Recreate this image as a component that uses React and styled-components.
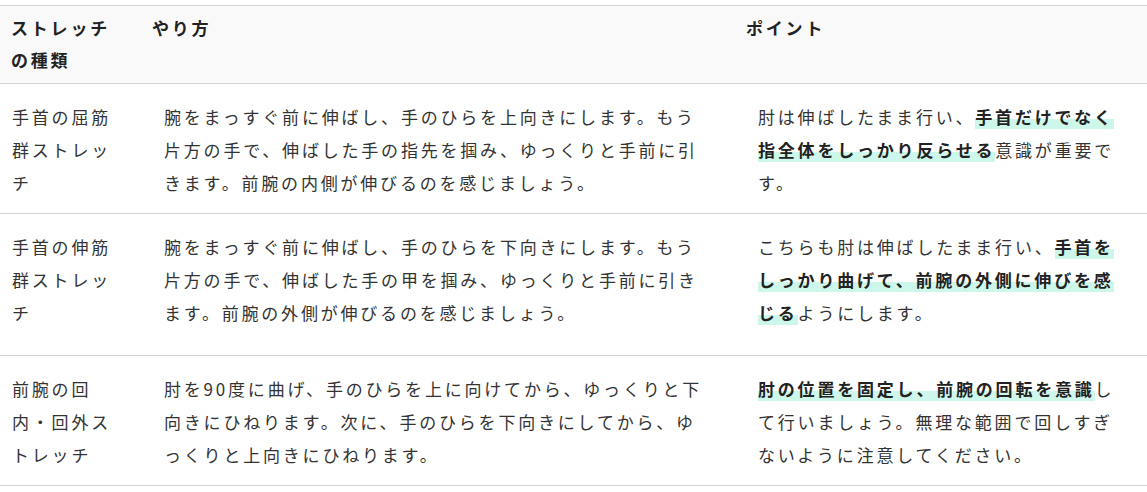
import React from "react";
import styled, { createGlobalStyle } from "styled-components";

const GlobalStyle = createGlobalStyle`
  body {
    margin: 0;
    padding-top: 5px;
    background: #fff;
    font-family: "Noto Sans CJK JP", "Noto Sans", sans-serif;
    color: #333;
  }
`;

const Table = styled.table`
  width: 1147px;
  border-collapse: collapse;
  table-layout: fixed;
  font-size: 17px;
  letter-spacing: 2.8px;
`;

const Col = styled.col`
  width: ${(p) => p.$w}px;
`;

const HeadRow = styled.tr`
  background-color: #f9f9f9;
  border-top: 1px solid #d3d3d3;
  border-bottom: 1px solid #d3d3d3;
`;

const HeadCell = styled.th`
  text-align: left;
  vertical-align: top;
  font-weight: 700;
  color: #222;
  line-height: 32px;
  padding: 6px 12px 7px ${(p) => p.$left}px;
`;

const Row = styled.tr`
  border-bottom: 1px solid #d3d3d3;
`;

const Cell = styled.td`
  vertical-align: top;
  line-height: 33px;
  padding: 16px 24px ${(p) => 14 + (p.$extra || 0)}px ${(p) => p.$left}px;
`;

const Mark = styled.strong`
  font-weight: 700;
  color: #222;
  background: linear-gradient(transparent 60%, #cdf7ea 60%);
`;

const rows = [
  {
    kind: "手首の屈筋群ストレッチ",
    how: "腕をまっすぐ前に伸ばし、手のひらを上向きにします。もう片方の手で、伸ばした手の指先を掴み、ゆっくりと手前に引きます。前腕の内側が伸びるのを感じましょう。",
    point: (
      <>
        肘は伸ばしたまま行い、<Mark>手首だけでなく指全体をしっかり反らせる</Mark>
        意識が重要です。
      </>
    ),
  },
  {
    kind: "手首の伸筋群ストレッチ",
    extra: 12,
    how: "腕をまっすぐ前に伸ばし、手のひらを下向きにします。もう片方の手で、伸ばした手の甲を掴み、ゆっくりと手前に引きます。前腕の外側が伸びるのを感じましょう。",
    point: (
      <>
        こちらも肘は伸ばしたまま行い、
        <Mark>手首をしっかり曲げて、前腕の外側に伸びを感じる</Mark>
        ようにします。
      </>
    ),
  },
  {
    kind: "前腕の回内・回外ストレッチ",
    how: "肘を90度に曲げ、手のひらを上に向けてから、ゆっくりと下向きにひねります。次に、手のひらを下向きにしてから、ゆっくりと上向きにひねります。",
    point: (
      <>
        <Mark>肘の位置を固定し、前腕の回転を意識</Mark>
        して行いましょう。無理な範囲で回しすぎないように注意してください。
      </>
    ),
  },
];

const App = () => {
  return (
    <>
      <GlobalStyle />
      <Table>
        <colgroup>
          <Col $w={140} />
          <Col $w={594} />
          <Col $w={413} />
        </colgroup>
        <thead>
          <HeadRow>
            <HeadCell $left={11}>ストレッチの種類</HeadCell>
            <HeadCell $left={12}>やり方</HeadCell>
            <HeadCell $left={12}>ポイント</HeadCell>
          </HeadRow>
        </thead>
        <tbody>
          {rows.map((r) => (
            <Row key={r.kind}>
              <Cell $left={12} $extra={r.extra}>{r.kind}</Cell>
              <Cell $left={24} $extra={r.extra}>{r.how}</Cell>
              <Cell $left={24} $extra={r.extra}>{r.point}</Cell>
            </Row>
          ))}
        </tbody>
      </Table>
    </>
  );
};

export default App;
